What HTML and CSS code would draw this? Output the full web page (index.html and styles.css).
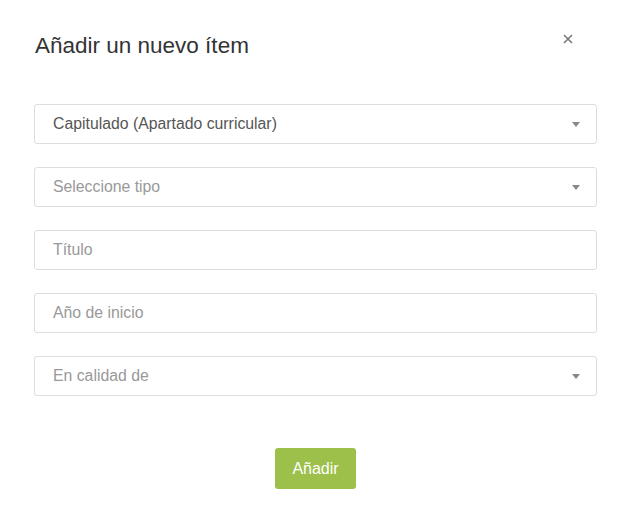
FILE: index.html
```html
<!DOCTYPE html>
<html lang="es">
<head>
<meta charset="utf-8">
<title>Añadir un nuevo ítem</title>
<link rel="stylesheet" href="styles.css">
</head>
<body>
<div class="modal">
  <div class="header">
    <h1 class="title">Añadir un nuevo ítem</h1>
    <button class="close" aria-label="Cerrar">
      <svg width="10" height="10" viewBox="0 0 10 10"><path d="M1 1 L9 9 M9 1 L1 9" stroke="#777" stroke-width="1.6" fill="none"/></svg>
    </button>
  </div>
  <form class="form">
    <div class="field select"><span class="value">Capitulado (Apartado curricular)</span><span class="caret"></span></div>
    <div class="field select"><span class="placeholder">Seleccione tipo</span><span class="caret"></span></div>
    <div class="field"><span class="placeholder">Título</span></div>
    <div class="field"><span class="placeholder">Año de inicio</span></div>
    <div class="field select"><span class="placeholder">En calidad de</span><span class="caret"></span></div>
    <div class="actions"><button type="button" class="btn">Añadir</button></div>
  </form>
</div>
</body>
</html>
```
FILE: styles.css
```css
html, body {
  margin: 0;
  padding: 0;
  background: #fff;
  font-family: "Liberation Sans", Arial, sans-serif;
}
.modal {
  width: 563px;
  padding: 33px 39px 0 34px;
}
.header {
  display: flex;
  justify-content: space-between;
  align-items: flex-start;
  height: 71px;
}
.title {
  margin: 0 0 0 1px;
  font-size: 22.5px;
  line-height: 25px;
  font-weight: normal;
  color: #333;
}
.close {
  border: 0;
  background: none;
  padding: 0;
  margin: 1px 24px 0 0;
  width: 10px;
  height: 10px;
  display: flex;
}
.form {
  display: flex;
  flex-direction: column;
  gap: 23px;
}
.field {
  box-sizing: border-box;
  height: 40px;
  border: 1px solid #ddd;
  border-radius: 3px;
  display: flex;
  align-items: center;
  justify-content: space-between;
  padding: 0 16px 0 18px;
  font-size: 15.8px;
}
.value { color: #555; }
.placeholder { color: #999; }
.caret {
  width: 0;
  height: 0;
  border-left: 4.5px solid transparent;
  border-right: 4.5px solid transparent;
  border-top: 5px solid #888;
}
.actions {
  display: flex;
  justify-content: center;
  margin-top: 29px;
}
.btn {
  width: 81px;
  height: 41px;
  border: 0;
  border-radius: 3px;
  background: #9cc04a;
  color: #fff;
  font-family: "Liberation Sans", Arial, sans-serif;
  font-size: 16px;
  padding: 0;
}
```
